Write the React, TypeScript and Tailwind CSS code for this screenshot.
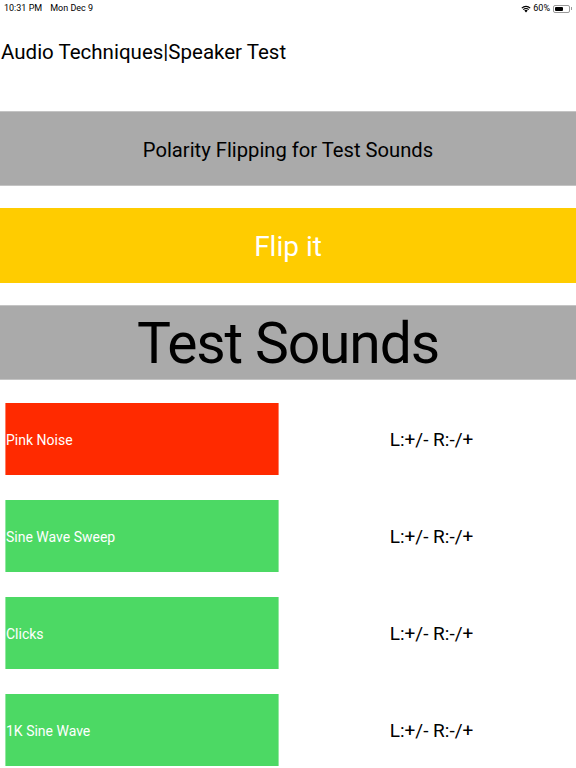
import React from "react";

const rows = [
  { label: "Pink Noise", color: "bg-[#ff2a00]" },
  { label: "Sine Wave Sweep", color: "bg-[#4cd964]" },
  { label: "Clicks", color: "bg-[#4cd964]" },
  { label: "1K Sine Wave", color: "bg-[#4cd964]" },
];

export default function App() {
  return (
    <div className="w-[576px] h-[768px] overflow-hidden bg-white text-black" style={{ fontFamily: "Roboto, 'Liberation Sans', sans-serif" }}>
      {/* status bar */}
      <div className="h-[16px] flex items-center justify-between px-[4px] text-[9px] leading-none pt-[1px]">
        <div className="flex gap-[8px]">
          <span>10:31 PM</span>
          <span>Mon Dec 9</span>
        </div>
        <div className="flex items-center gap-[2px]">
          <svg width="10" height="8" viewBox="0 0 10 8">
            <path d="M5 7.5 L3.3 5.6 A2.4 2.4 0 0 1 6.7 5.6 Z" fill="black" />
            <path d="M1.9 4.2 A4.4 4.4 0 0 1 8.1 4.2 L7.3 5 A3.3 3.3 0 0 0 2.7 5 Z" fill="black" />
            <path d="M0.4 2.7 A6.6 6.6 0 0 1 9.6 2.7 L8.8 3.5 A5.5 5.5 0 0 0 1.2 3.5 Z" fill="black" />
          </svg>
          <span>60%</span>
          <div className="flex items-center ml-[1px]">
            <div className="w-[17px] h-[8px] rounded-[2px] border border-[#999] p-[1px]">
              <div className="h-full w-[60%] bg-black rounded-[1px]" />
            </div>
            <div className="w-[1px] h-[3px] bg-[#999] ml-[1px]" />
          </div>
        </div>
      </div>

      {/* title */}
      <div className="h-[95px] pl-[1px] pt-[26px]">
        <span className="block text-[20.5px] leading-[20px]">Audio Techniques|Speaker Test</span>
      </div>

      <div className="flex flex-col gap-[22px]">
        <div className="h-[75px] bg-[#aaaaaa] border-y border-[#c4c4c4] flex items-center justify-center">
          <span className="text-[20.2px] leading-none pt-[3px]">Polarity Flipping for Test Sounds</span>
        </div>
        <div className="h-[75px] bg-[#ffcc00] flex items-center justify-center">
          <span className="text-[28px] leading-none text-white pt-[2px]">Flip it</span>
        </div>
        <div className="h-[75px] bg-[#aaaaaa] border-y border-[#c4c4c4] flex items-center justify-center">
          <span className="text-[57px] leading-none pt-[2px] tracking-[-0.02em]">Test Sounds</span>
        </div>
      </div>

      <div className="flex flex-col gap-[25px] pt-[23px]">
        {rows.map((r) => (
          <div key={r.label} className="flex items-center h-[72px]">
            <div className={`${r.color} w-[274px] h-[72px] ml-[5px] flex items-center border-x border-white/40`}>
              <span className="text-white text-[14px] leading-none pt-[1px]">{r.label}</span>
            </div>
            <div className="flex-1 flex justify-center pl-[8px]">
              <span className="text-[19px] leading-none pt-[1px]">L:+/- R:-/+</span>
            </div>
          </div>
        ))}
      </div>
    </div>
  );
}
